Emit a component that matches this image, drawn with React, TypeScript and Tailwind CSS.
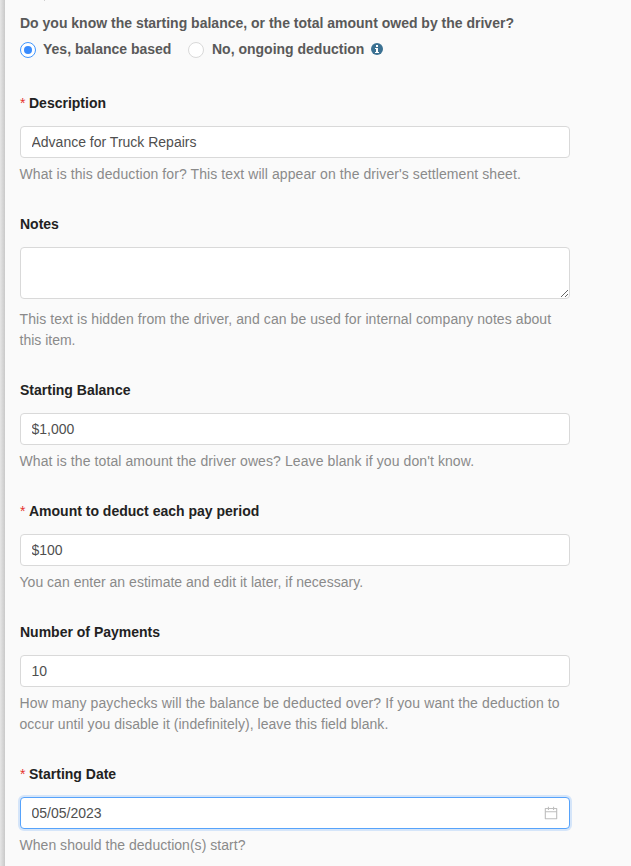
import type { ReactNode } from "react";

function Field({ label, required, help, helpGap = "mt-1.5", children }: { label: string; required?: boolean; help: ReactNode; helpGap?: string; children: ReactNode }) {
  return (
    <section className="mb-[29px] w-[550px]">
      <div className="mb-[13px] flex h-5 items-center whitespace-pre text-[14px] font-bold leading-5 text-[#222]">
        {required && <span className="mr-1 w-[5px] font-normal text-[#e5322d]">*</span>}
        <span>{label}</span>
      </div>
      {children}
      <p className={`${helpGap} -ml-[0.5px] whitespace-nowrap text-[14px] leading-[21px] text-[#8a8a8a]`}>{help}</p>
    </section>
  );
}

const inputClass = "block h-8 w-full rounded-[4px] border border-[#d9d9d9] bg-white px-[10.5px] text-[14px] text-[#4f4f4f] outline-none";

function CalendarIcon() {
  return (
    <svg className="absolute right-3 top-[9px] h-[14px] w-[14px] text-[#bfbfbf]" viewBox="64 64 896 896" fill="currentColor">
      <path d="M880 184H712v-64c0-4.400-3.600-8-8-8h-56c-4.400 0-8 3.600-8 8v64H384v-64c0-4.400-3.600-8-8-8h-56c-4.400 0-8 3.600-8 8v64H144c-17.700 0-32 14.300-32 32v664c0 17.700 14.300 32 32 32h736c17.700 0 32-14.300 32-32V216c0-17.700-14.300-32-32-32zm-40 656H184V460h656v380zM184 392V256h128v48c0 4.400 3.600 8 8 8h56c4.400 0 8-3.600 8-8v-48h256v48c0 4.400 3.600 8 8 8h56c4.400 0 8-3.600 8-8v-48h128v136H184z" />
    </svg>
  );
}

export default function App() {
  return (
    <main className="flex h-[866px] w-[631px] overflow-hidden bg-[#fafafa] font-['Liberation_Sans',Arial,sans-serif]">
      <div className="w-[5px] shrink-0 bg-linear-to-r from-[#e6e6e6] to-[#c9c9c9]" />
      <div className="flex-1 pl-[15px]">
        <div className="flex h-[13px]">
          <span className="ml-6 h-px w-px bg-[#cfcfcf]" />
        </div>
        <div className="whitespace-nowrap text-[14px] font-bold leading-5 text-[#595959]">
          <p>Do you know the starting balance, or the total amount owed by the driver?</p>
          <div className="mt-1.5 flex h-5 items-center">
            <span className="mt-0.5 flex h-4 w-4 items-center justify-center rounded-full border border-[#4096ff] bg-white">
              <span className="h-2 w-2 rounded-full bg-[#388bfd]" />
            </span>
            <span className="ml-[7px] w-[129px]">Yes, balance based</span>
            <span className="ml-4 mt-0.5 h-4 w-4 rounded-full border border-[#d9d9d9] bg-white" />
            <span className="ml-2 w-[152px]">No, ongoing deduction</span>
            <svg className="ml-[7px] h-3 w-3" viewBox="0 0 12 12">
              <circle cx="6" cy="6" r="6" fill="#3b7192" />
              <path d="M5 2h2v2H5zM4 5h3v4h1v1H4V9h1V6H4z" fill="white" />
            </svg>
          </div>
        </div>
        <div className="h-[34px]" />
        <Field label="Description" required help={<span className="tracking-[0.087px]">What is this deduction for? This text will appear on the driver's settlement sheet.</span>}>
          <input className={inputClass} defaultValue="Advance for Truck Repairs" />
        </Field>
        <Field label="Notes" helpGap="mt-2.5" help={<><span className="tracking-[0.075px]">This text is hidden from the driver, and can be used for internal company notes about</span><br />this item.</>}>
          <textarea className="block h-[52px] w-full resize-y rounded-[4px] border border-[#d9d9d9] bg-white outline-none" />
        </Field>
        <Field label="Starting Balance" help={<span className="tracking-[0.095px]">What is the total amount the driver owes? Leave blank if you don't know.</span>}>
          <input className={inputClass} defaultValue="$1,000" />
        </Field>
        <Field label="Amount to deduct each pay period" required help={<span className="tracking-[0.02px]">You can enter an estimate and edit it later, if necessary.</span>}>
          <input className={inputClass} defaultValue="$100" />
        </Field>
        <Field label="Number of Payments" help={<><span className="tracking-[0.115px]">How many paychecks will the balance be deducted over? If you want the deduction to</span><br /><span className="tracking-[0.035px]">occur until you disable it (indefinitely), leave this field blank.</span></>}>
          <input className={inputClass} defaultValue="10" />
        </Field>
        <Field label="Starting Date" required help={<span className="tracking-[0.03px]">When should the deduction(s) start?</span>}>
          <div className="relative">
            <input className="block h-8 w-full rounded-[4px] border border-[#57a3fb] bg-white px-[10.5px] text-[14px] text-[#4f4f4f] shadow-[0_0_0_2px_#d5e5f9] outline-none" defaultValue="05/05/2023" />
            <CalendarIcon />
          </div>
        </Field>
      </div>
    </main>
  );
}
